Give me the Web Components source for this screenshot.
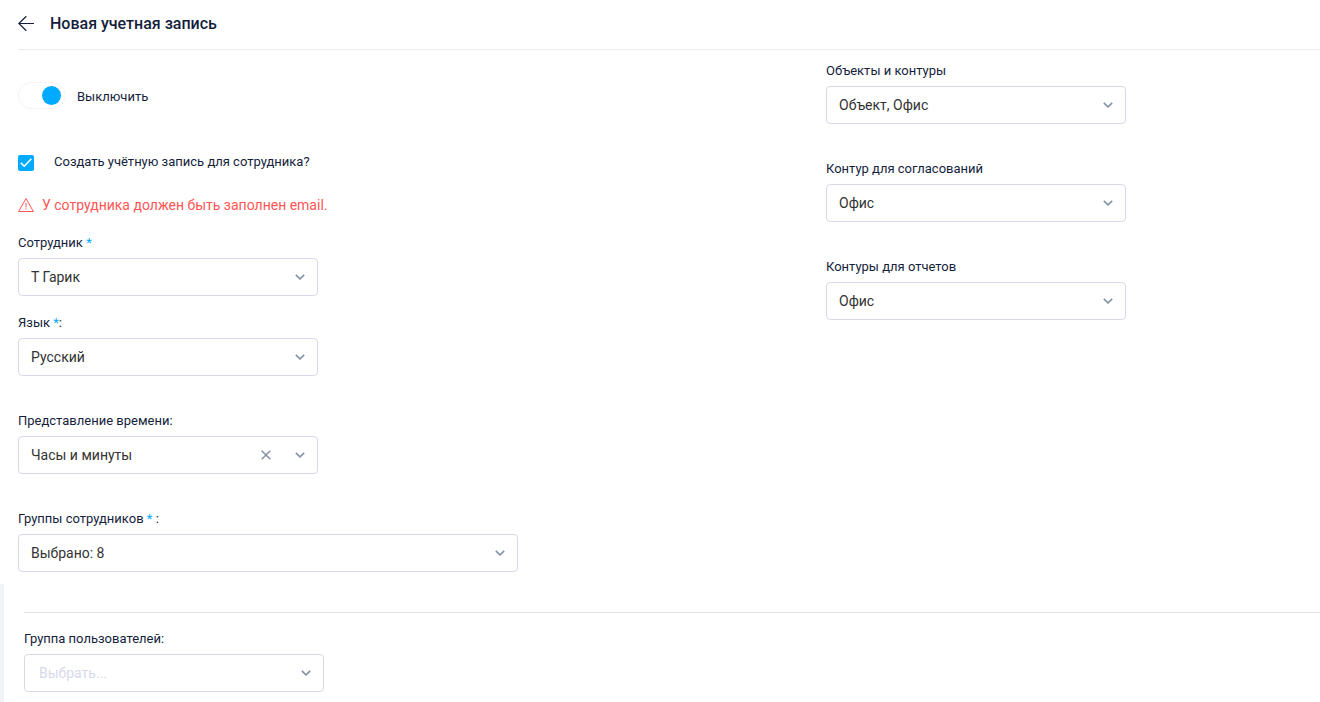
<!DOCTYPE html>
<html lang="ru">
<head>
<meta charset="utf-8">
<meta name="viewport" content="width=device-width, initial-scale=1">
<title>Новая учетная запись</title>
<style>
  :root {
    --accent: #00aaff;
    --danger: #ff5655;
    --text: #141e3c;
    --value: #333333;
    --border: #d7d9ea;
    --muted: #8392a5;
  }
  body {
    margin: 0;
    background: #fff;
    color: var(--text);
    font: 13px/16px Roboto, "Liberation Sans", sans-serif;
  }
</style>
</head>
<body>
<account-page></account-page>

<script>
class PageHeader extends HTMLElement {
  constructor() {
    super();
    this.attachShadow({ mode: 'open' });
    this.render();
  }

  render() {
    this.shadowRoot.innerHTML = `
      <style>
        :host { display: block; padding-left: 18px; }
        header {
          display: flex;
          align-items: center;
          gap: 16px;
          padding: 12px 0 13px;
          border-bottom: 1px solid #ebebeb;
        }
        button { display: flex; padding: 0; border: 0; background: none; color: inherit; cursor: pointer; }
        h1 { margin: 0; font-size: 16px; line-height: 24px; font-weight: 500; }
      </style>
      <header>
        <button type="button" aria-label="Назад">
          <svg width="16" height="16" viewBox="0 0 16 16" fill="none" stroke="currentColor" stroke-width="1.2">
            <path d="M16 7.5H.8M8.3.2L.8 7.5l7.5 7.3"/>
          </svg>
        </button>
        <h1><slot></slot></h1>
      </header>
    `;
  }
}

class ToggleSwitch extends HTMLElement {
  constructor() {
    super();
    this.attachShadow({ mode: 'open' });
    this.render();
  }

  render() {
    this.shadowRoot.innerHTML = `
      <style>
        :host { display: flex; align-items: flex-start; gap: 11px; height: 28px; }
        label { line-height: 30px; }
        input {
          appearance: none;
          display: flex;
          align-items: center;
          box-sizing: border-box;
          width: 48px;
          height: 27px;
          margin: 0;
          padding: 0 4px;
          border: 1px solid #f3f3f5;
          border-radius: 14px;
          background: #fff;
        }
        input::before {
          content: '';
          width: 19px;
          height: 19px;
          border-radius: 50%;
          background: #c4c9d4;
        }
        input:checked { justify-content: flex-end; }
        input:checked::before { background: var(--accent); }
      </style>
      <input type="checkbox" role="switch" id="switch" checked>
      <label for="switch"><slot></slot></label>
    `;
  }
}

class CheckField extends HTMLElement {
  constructor() {
    super();
    this.attachShadow({ mode: 'open' });
    this.render();
  }

  render() {
    this.shadowRoot.innerHTML = `
      <style>
        :host { display: flex; align-items: flex-end; gap: 20px; }
        .box { display: grid; }
        .box > * { grid-area: 1 / 1; }
        input {
          appearance: none;
          box-sizing: border-box;
          width: 16px;
          height: 16px;
          margin: 0;
          border: 1px solid var(--border);
          border-radius: 2px;
        }
        input:checked { border: 0; background: var(--accent); }
        svg { visibility: hidden; pointer-events: none; }
        input:checked + svg { visibility: visible; }
        label { padding-bottom: 1px; }
      </style>
      <span class="box">
        <input type="checkbox" id="check" checked>
        <svg width="16" height="16" viewBox="0 0 16 16" fill="none" stroke="#fff" stroke-width="1.6">
          <path d="M2.8 7.8l3.4 3.4 7.2-7.4"/>
        </svg>
      </span>
      <label for="check"><slot></slot></label>
    `;
  }
}

class WarningMessage extends HTMLElement {
  constructor() {
    super();
    this.attachShadow({ mode: 'open' });
    this.render();
  }

  render() {
    this.shadowRoot.innerHTML = `
      <style>
        :host {
          display: flex;
          align-items: center;
          gap: 8px;
          color: var(--danger);
          font-size: 14px;
          line-height: 22px;
        }
      </style>
      <svg width="16" height="16" viewBox="0 0 16 16" fill="none" stroke="currentColor">
        <path d="M8 1.5L15.4 14.5H.6z" stroke-linejoin="round"/>
        <path d="M8 6v4.4M8 11.4v1.3"/>
      </svg>
      <span role="alert"><slot></slot></span>
    `;
  }
}

class SelectField extends HTMLElement {
  constructor() {
    super();
    this.attachShadow({ mode: 'open' });
    this.render();
  }

  connectedCallback() {
    const select = this.shadowRoot.querySelector('select');
    const placeholder = this.getAttribute('placeholder');
    select.add(new Option(this.getAttribute('value') || placeholder));
    select.classList.toggle('empty', !this.hasAttribute('value'));

    const clear = this.shadowRoot.querySelector('button');
    clear.hidden = !this.hasAttribute('clearable');
    clear.addEventListener('click', () => {
      select.selectedIndex = -1;
      clear.hidden = true;
    });
  }

  render() {
    this.shadowRoot.innerHTML = `
      <style>
        :host { display: flex; flex-direction: column; gap: 7px; max-width: 300px; }
        :host([wide]) { max-width: 500px; }
        ::slotted(b) { color: var(--accent); font-weight: 400; }
        .control { display: grid; align-items: center; }
        .control > * { grid-area: 1 / 1; }
        select {
          appearance: none;
          box-sizing: border-box;
          width: 100%;
          height: 38px;
          margin: 0;
          padding: 0 68px 0 12px;
          border: 1px solid var(--border);
          border-radius: 4px;
          background: #fff;
          color: var(--value);
          font: inherit;
          font-size: 14px;
        }
        select.empty { padding-left: 14px; color: var(--border); }
        .icons {
          display: flex;
          justify-content: flex-end;
          align-items: center;
          gap: 24px;
          padding-right: 13px;
          color: var(--muted);
          pointer-events: none;
        }
        button { display: flex; padding: 0; border: 0; background: none; color: inherit; pointer-events: auto; }
        button[hidden] { display: none; }
      </style>
      <label for="select"><slot></slot></label>
      <div class="control">
        <select id="select"></select>
        <div class="icons">
          <button type="button" aria-label="Очистить">
            <svg width="10" height="10" viewBox="0 0 10 10" fill="none" stroke="currentColor" stroke-width="1.5">
              <path d="M.7.7l8.6 8.6M9.3.7L.7 9.3"/>
            </svg>
          </button>
          <svg width="10" height="6" viewBox="0 0 10 6" fill="none" stroke="currentColor" stroke-width="1.6">
            <path d="M.8.8L5 4.8 9.2.8"/>
          </svg>
        </div>
      </div>
    `;
  }
}

class AccountPage extends HTMLElement {
  constructor() {
    super();
    this.attachShadow({ mode: 'open' });
    this.render();
  }

  render() {
    this.shadowRoot.innerHTML = `
      <style>
        :host { display: flex; flex-direction: column; min-height: 100vh; }
        form { flex: 1; display: flex; flex-direction: column; }
        .columns {
          display: grid;
          grid-template-columns: minmax(0, 1fr) 494px;
          padding: 13px 0 12px 18px;
        }
        .fields { display: flex; flex-direction: column; gap: 37px; }
        .employee { display: flex; flex-direction: column; gap: 19px; }
        toggle-switch { margin-top: 19px; }
        check-field { margin-top: 25px; }
        warning-message { margin-top: 4px; }
        .users {
          flex: 1;
          padding: 28px 0 10px 20px;
          border-left: 4px solid #f1f2f7;
        }
        hr { margin: 0 0 18px; border: 0; border-top: 1px solid #e1e1e4; }
      </style>
      <page-header>Новая учетная запись</page-header>
      <form>
        <div class="columns">
          <div class="fields">
            <div class="employee">
              <toggle-switch>Выключить</toggle-switch>
              <check-field>Создать учётную запись для сотрудника?</check-field>
              <warning-message>У сотрудника должен быть заполнен email.</warning-message>
              <select-field value="Т Гарик">Сотрудник <b>*</b></select-field>
              <select-field value="Русский">Язык <b>*</b>:</select-field>
            </div>
            <select-field value="Часы и минуты" clearable>Представление времени:</select-field>
            <select-field value="Выбрано: 8" wide>Группы сотрудников <b>*</b> :</select-field>
          </div>
          <div class="fields">
            <select-field value="Объект, Офис">Объекты и контуры</select-field>
            <select-field value="Офис">Контур для согласований</select-field>
            <select-field value="Офис">Контуры для отчетов</select-field>
          </div>
        </div>
        <section class="users">
          <hr>
          <select-field placeholder="Выбрать...">Группа пользователей:</select-field>
        </section>
      </form>
    `;
  }
}

customElements.define('page-header', PageHeader);
customElements.define('toggle-switch', ToggleSwitch);
customElements.define('check-field', CheckField);
customElements.define('warning-message', WarningMessage);
customElements.define('select-field', SelectField);
customElements.define('account-page', AccountPage);
</script>
</body>
</html>
